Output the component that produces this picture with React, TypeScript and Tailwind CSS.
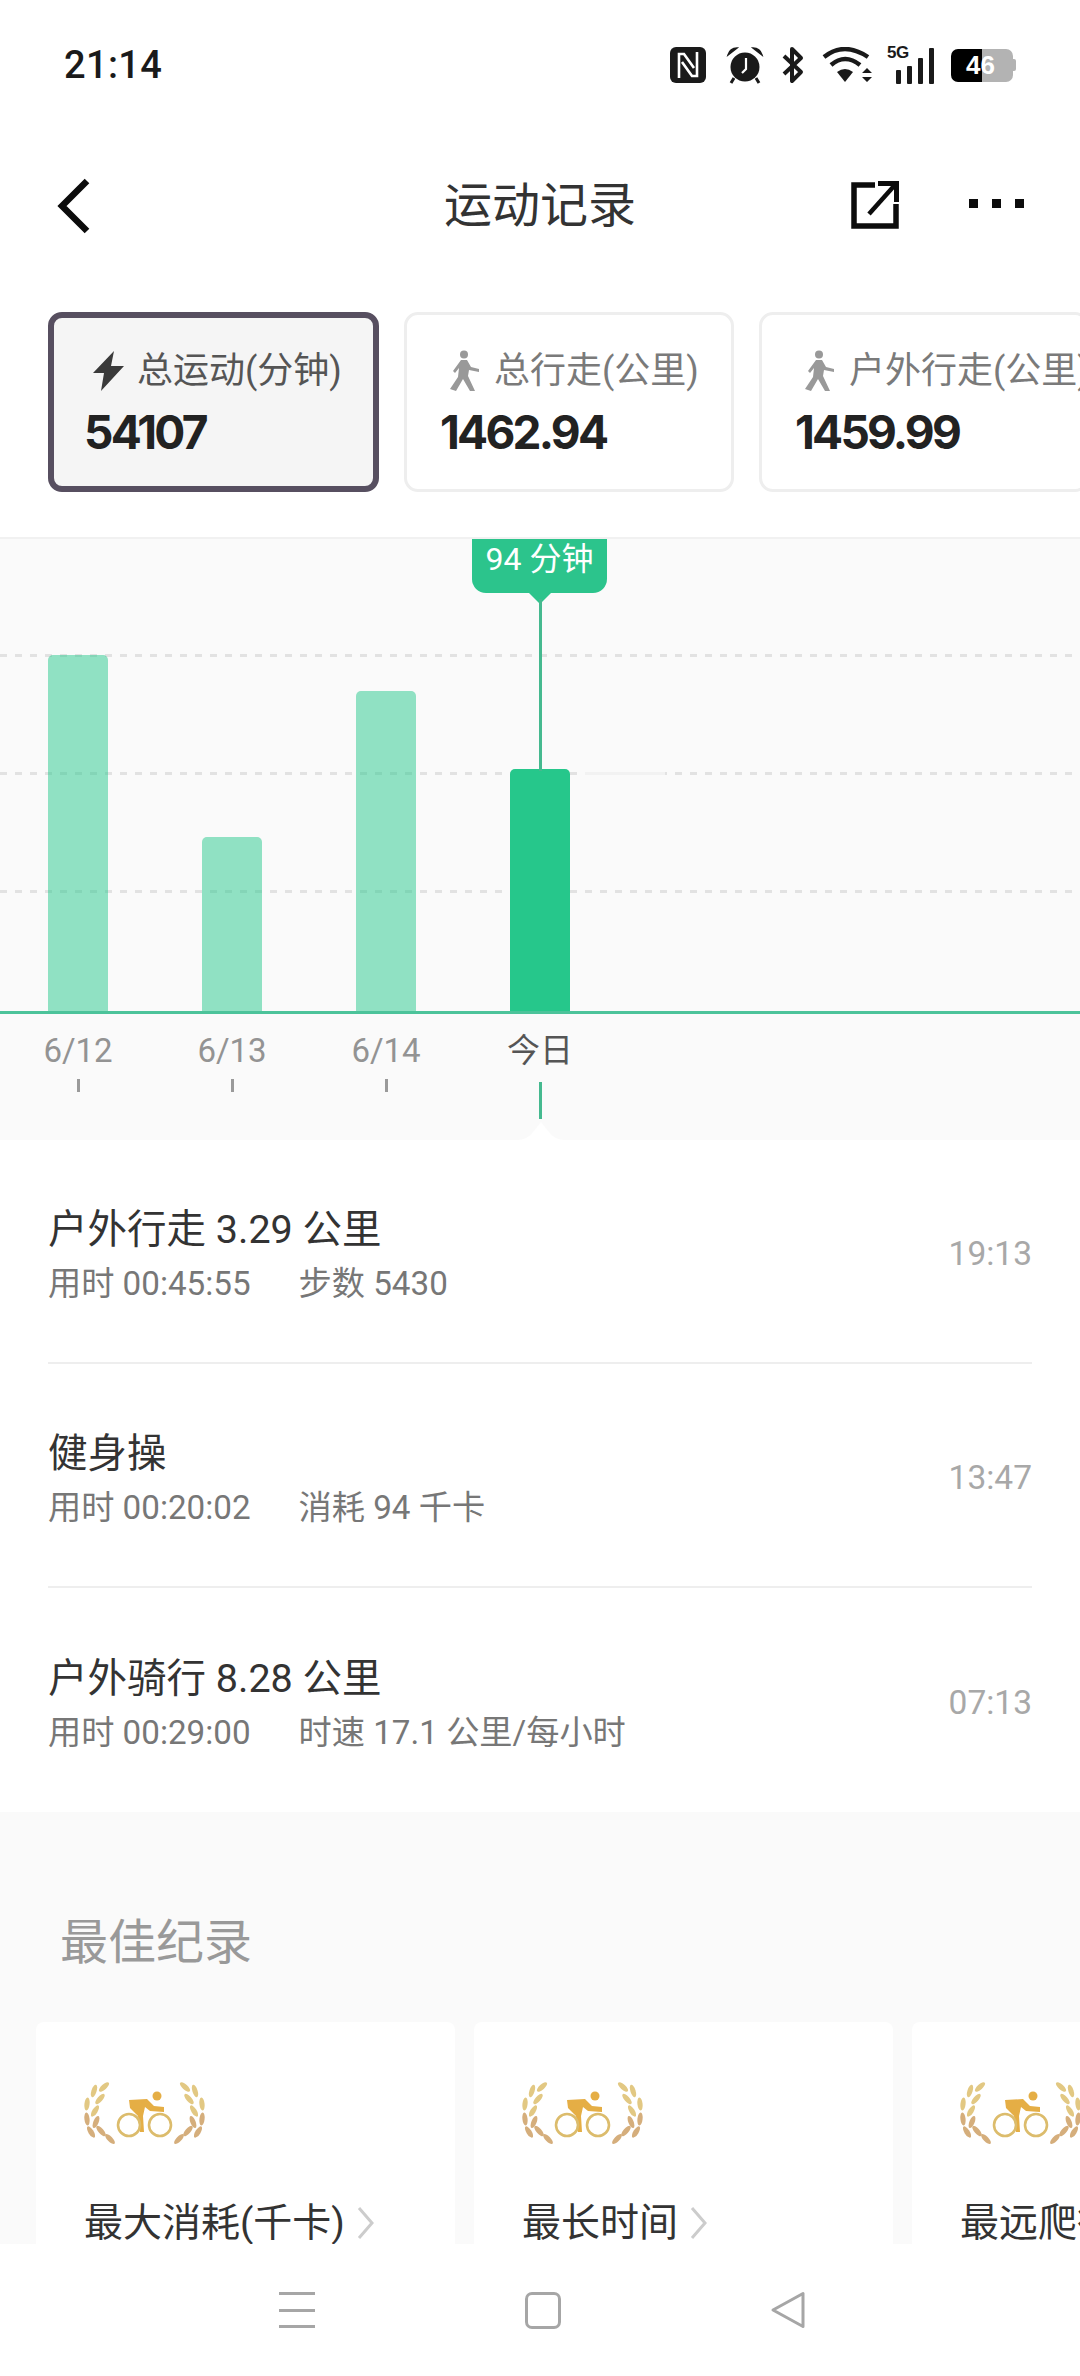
import React from "react";

const Bolt = () => (
  <svg width="34" height="40" viewBox="0 0 34 40" className="shrink-0 ml-[8px]">
    <path d="M22 0 L1 22 L12 22 L9 40 L32 15 L19 15 Z" fill="#3a3a3a" />
  </svg>
);

const Walker = () => (
  <svg width="32" height="42" viewBox="0 0 32 42" className="shrink-0 ml-[9px]">
    <circle cx="15" cy="4.5" r="4" fill="#999" />
    <path d="M12 10 L18 10 L22 17 L30 19 L30 22 L20 20 L19 26 L26 41 L21 41 L14 29 L7 41 L1 39 L9 27 L10 18 L6 23 L4 21 Z" fill="#999" />
  </svg>
);

const StatCard = ({ active, icon, label, value }: { active?: boolean; icon: React.ReactNode; label: string; value: string }) => (
  <div
    className={
      active
        ? "w-[331px] h-[180px] shrink-0 rounded-[14px] border-[6px] border-[#574f60] bg-[#f5f5f5] pt-[31px] pl-[30px]"
        : "w-[330px] h-[180px] shrink-0 rounded-[14px] border-[3px] border-[#eeeeee] bg-white pt-[34px] pl-[33px]"
    }
  >
    <div className={active ? "flex items-center gap-[11px] h-[44px] whitespace-nowrap" : "flex items-center gap-[13px] h-[44px] whitespace-nowrap"}>
      {icon}
      <span className={active ? "text-[36px] leading-[44px] text-[#555]" : "text-[36px] leading-[44px] text-[#7a7a7a]"}>{label}</span>
    </div>
    <div className="mt-[15px] text-[46px] leading-[48px] font-bold tracking-[-0.06em] text-[#222] font-['Inter',sans-serif]">{value}</div>
  </div>
);

const Row = ({ title, sub1, sub2, time, last }: { title: string; sub1: string; sub2: string; time: string; last?: boolean }) => (
  <div className={last ? "h-[224px] pt-[10px] flex items-center justify-between" : "h-[224px] pt-[10px] flex items-center justify-between border-b-2 border-[#eeeeee]"}>
    <div className="flex flex-col gap-[6px]">
      <div className="text-[39.5px] leading-[50px] text-[#333]">{title}</div>
      <div className="flex text-[33.2px] leading-[46px] text-[#777] gap-[48px]">
        <span>{sub1}</span>
        <span>{sub2}</span>
      </div>
    </div>
    <div className="text-[33.5px] text-[#a8a8a8] pb-[4px]">{time}</div>
  </div>
);

const leaves: [number, number, number][] = [
  [44, 27, 48], [34, 31, 18], [40, 39, 42], [27, 44, 6], [35, 51, 32],
  [27, 59, -6], [36, 62, 22], [31, 72, -32], [41, 71, -42], [50, 79, -44],
];

const Laurel = () => (
  <svg width="170" height="90" viewBox="0 0 170 90" className="shrink-0">
    {leaves.map(([x, y, r], i) => (
      <g key={i}>
        <ellipse cx={x} cy={y} rx="2.6" ry="6.5" fill={i < 5 ? "#e2c883" : "#d5ae7c"} transform={`rotate(${r} ${x} ${y})`} />
        <ellipse cx={x} cy={y} rx="2.6" ry="6.5" fill={i < 5 ? "#e2c883" : "#d5ae7c"} transform={`translate(169 0) scale(-1 1) rotate(${r} ${x} ${y})`} />
      </g>
    ))}
    <circle cx="97" cy="36" r="4.5" fill="#e5ae45" />
    <path d="M69 40 L87 39 L94 46 L104 47 L104 52 L90 51 L85 47 L83 56 L84 72 L80 72 L78 56 L70 48 Z" fill="#e5ae45" />
    <circle cx="69" cy="65" r="11" fill="none" stroke="#dcbc6c" strokeWidth="2.6" />
    <circle cx="100" cy="65" r="11" fill="none" stroke="#dcbc6c" strokeWidth="2.6" />
  </svg>
);

const BestCard = ({ title }: { title: string }) => (
  <div className="w-[419px] shrink-0 h-[260px] bg-white rounded-t-[8px] pt-[38px] pl-[24px]">
    <Laurel />
    <div className="mt-[48px] pl-[24px] flex items-center gap-[12px] whitespace-nowrap">
      <span className="text-[39px] leading-[50px] text-[#333]">{title}</span>
      <svg width="18" height="34" viewBox="0 0 18 34">
        <path d="M2 2 L15 17 L2 32" fill="none" stroke="#cccccc" strokeWidth="3" />
      </svg>
    </div>
  </div>
);

const StatusIcons = () => (
  <div className="flex items-center pt-[2px]">
    <svg width="36" height="36" viewBox="0 0 36 36" className="mr-[20px]">
      <rect width="36" height="36" rx="6" fill="#1a1a1a" />
      <path d="M9 31 V7 H14 L24 21 M27 5 V29 H22 L12 15" fill="none" stroke="#fff" strokeWidth="2.6" />
    </svg>
    <svg width="38" height="38" viewBox="0 0 38 38" className="mr-[18px]">
      <circle cx="19" cy="21" r="14.5" fill="#1a1a1a" />
      <path d="M2 9 Q4 2 11 2 Z M36 9 Q34 2 27 2 Z" fill="#1a1a1a" stroke="#1a1a1a" strokeWidth="1.5" />
      <path d="M8 32 L5 37 M30 32 L33 37" stroke="#1a1a1a" strokeWidth="3" />
      <path d="M20 12 V23 L16 27" fill="none" stroke="#fff" strokeWidth="2.2" />
    </svg>
    <svg width="22" height="38" viewBox="0 0 22 38" className="mr-[18px]">
      <path d="M2 10 L19 26 L10 35 V3 L19 12 L2 28" fill="none" stroke="#1a1a1a" strokeWidth="4" strokeLinejoin="round" />
    </svg>
    <svg width="50" height="36" viewBox="0 0 50 36" className="mr-[15px]">
      <path d="M2 10 Q22 -6 46 10" fill="none" stroke="#1a1a1a" strokeWidth="4.4" />
      <path d="M9 18 Q23 6 38 18" fill="none" stroke="#1a1a1a" strokeWidth="4.4" />
      <path d="M15 25 L23 35 L31 25 Q23 19 15 25 Z" fill="#1a1a1a" />
      <path d="M40 26 L45 21 L50 26 Z M40 30 L50 30 L45 35 Z" fill="#1a1a1a" />
    </svg>
    <div className="relative w-[47px] h-[37px] mr-[17px]">
      <span className="absolute left-0 top-[-3px] text-[17px] leading-[18px] font-bold tracking-[-0.03em] text-[#1a1a1a] font-['Liberation_Sans',sans-serif]">5G</span>
      <div className="absolute inset-0 flex items-end justify-end gap-[6px]">
        <div className="w-[5px] h-[14px] bg-[#1a1a1a] rounded-[1px]" />
        <div className="w-[5px] h-[18px] bg-[#1a1a1a] rounded-[1px]" />
        <div className="w-[5px] h-[26px] bg-[#1a1a1a] rounded-[1px]" />
        <div className="w-[5px] h-[36px] bg-[#1a1a1a] rounded-[1px]" />
      </div>
    </div>
    <div className="relative flex items-center">
      <div className="w-[62px] h-[33px] rounded-[7px] overflow-hidden flex">
        <div className="w-[31px] bg-black" />
        <div className="w-[31px] bg-[#b3b3b3]" />
      </div>
      <div className="w-[3px] h-[12px] bg-[#b3b3b3] rounded-r-[2px]" />
      <span className="absolute left-[15px] top-0 h-[33px] leading-[33px] text-[26px] font-bold text-white font-['Liberation_Sans',sans-serif]">46</span>
    </div>
  </div>
);

const labels = [
  { t: "6/12", bar: 356, active: false },
  { t: "6/13", bar: 174, active: false },
  { t: "6/14", bar: 320, active: false },
  { t: "今日", bar: 242, active: true },
];

const Grid = "h-[3px] w-full bg-[repeating-linear-gradient(90deg,#e2e2e2_0_7px,transparent_7px_15px)]";

export default function App() {
  return (
    <div className="w-[1080px] h-[2376px] overflow-hidden bg-white flex flex-col font-['Roboto','Noto_Sans_CJK_SC',sans-serif]">
      {/* status bar */}
      <div className="h-[128px] shrink-0 flex items-center justify-between pl-[64px] pr-[64px]">
        <span className="text-[38px] font-medium text-[#1a1a1a] tracking-[0.01em] pt-[2px]">21:14</span>
        <StatusIcons />
      </div>

      {/* header */}
      <div className="relative h-[156px] shrink-0 flex items-center justify-between pl-[56px] pr-[56px]">
        <svg width="36" height="56" viewBox="0 0 36 56">
          <path d="M31 3 L6 28 L31 53" fill="none" stroke="#0c0c0c" strokeWidth="6.5" />
        </svg>
        <div className="absolute left-0 right-0 text-center text-[48px] leading-[60px] text-[#333]">运动记录</div>
        <div className="flex items-center gap-[69px]">
          <svg width="50" height="50" viewBox="0 0 50 50" className="mb-[3px]">
            <path d="M25 5 H4 V46 H46 V24" fill="none" stroke="#0c0c0c" strokeWidth="5.5" />
            <path d="M19 34 L44 6" fill="none" stroke="#0c0c0c" strokeWidth="4.5" />
            <path d="M28 1 H49 V22 H44 V6 H28 Z" fill="#0c0c0c" />
          </svg>
          <div className="flex gap-[14px] mb-[6px]">
            <div className="w-[9px] h-[9px] bg-[#0c0c0c]" />
            <div className="w-[9px] h-[9px] bg-[#0c0c0c]" />
            <div className="w-[9px] h-[9px] bg-[#0c0c0c]" />
          </div>
        </div>
      </div>

      {/* stat cards */}
      <div className="mt-[28px] shrink-0 flex gap-[25px] pl-[48px] overflow-hidden">
        <StatCard active icon={<Bolt />} label="总运动(分钟)" value="54107" />
        <StatCard icon={<Walker />} label="总行走(公里)" value="1462.94" />
        <StatCard icon={<Walker />} label="户外行走(公里)" value="1459.99" />
      </div>

      {/* chart */}
      <div className="mt-[45px] relative h-[603px] shrink-0 bg-[#fafafa] border-t-2 border-[#f1f1f1] overflow-hidden">
        <div className="relative h-[472px] border-b-[3px] border-[#4cc39a] box-content">
          <div className="absolute inset-0 flex flex-col pt-[115px] gap-[115px]">
            <div className={Grid} />
            <div className={Grid} />
            <div className={Grid} />
          </div>
          <div className="absolute left-[585px] top-[233px] w-[80px] h-[3px] bg-[#f2f2f2]" />
          <div className="absolute inset-0 flex items-end pl-[48px] gap-[94px]">
            {labels.map((l) => (
              <div
                key={l.t}
                style={{ height: l.bar }}
                className={l.active ? "w-[60px] rounded-t-[5px] bg-[#26c78b]" : "w-[60px] rounded-t-[5px] bg-[#26c78b]/50"}
              />
            ))}
          </div>
          {/* tooltip */}
          <div className="absolute left-[472px] top-0 w-[135px] h-[54px] rounded-b-[14px] bg-[#2cc48c] text-white text-[32px] leading-[40px] text-center whitespace-nowrap">
            94 分钟
          </div>
          <svg width="24" height="12" viewBox="0 0 24 12" className="absolute left-[528px] top-[53px]">
            <path d="M0 0 H24 L12 12 Z" fill="#2cc48c" />
          </svg>
          <div className="absolute left-[539px] top-[60px] w-[3px] h-[172px] bg-[#45b98f]" />
        </div>
        <div className="flex pl-[48px] gap-[94px] pt-[15px]">
          {labels.map((l) => (
            <div key={l.t} className="w-[60px] flex flex-col items-center">
              <span className={l.active ? "text-[33px] leading-[44px] whitespace-nowrap text-[#555]" : "text-[33px] leading-[44px] whitespace-nowrap text-[#939393]"}>{l.t}</span>
              {l.active ? (
                <div className="mt-[9px] w-[3px] h-[37px] bg-[#45b98f]" />
              ) : (
                <div className="mt-[6px] w-[3px] h-[13px] bg-[#9a9a9a]" />
              )}
            </div>
          ))}
        </div>
        <svg width="48" height="22" viewBox="0 0 48 22" className="absolute left-[517px] bottom-0">
          <path d="M0 22 Q10 22 16 14 L24 4 L32 14 Q38 22 48 22 Z" fill="#ffffff" />
        </svg>
      </div>

      {/* list */}
      <div className="shrink-0 pl-[48px] pr-[48px]">
        <Row title="户外行走 3.29 公里" sub1="用时 00:45:55" sub2="步数 5430" time="19:13" />
        <Row title="健身操" sub1="用时 00:20:02" sub2="消耗 94 千卡" time="13:47" />
        <Row title="户外骑行 8.28 公里" sub1="用时 00:29:00" sub2="时速 17.1 公里/每小时" time="07:13" last />
      </div>

      {/* best records */}
      <div className="h-[432px] shrink-0 bg-[#fafafa] overflow-hidden">
        <div className="pl-[60px] pt-[99px] text-[48px] leading-[64px] text-[#999]">最佳纪录</div>
        <div className="mt-[47px] flex gap-[19px] pl-[36px]">
          <BestCard title="最大消耗(千卡)" />
          <BestCard title="最长时间" />
          <BestCard title="最远爬行" />
        </div>
      </div>

      {/* nav */}
      <div className="h-[132px] shrink-0 bg-white flex items-center pl-[279px]">
        <div className="w-[36px] h-[36px] flex flex-col justify-between">
          <div className="h-[3px] bg-[#a6a6a6]" />
          <div className="h-[3px] bg-[#a6a6a6]" />
          <div className="h-[3px] bg-[#a6a6a6]" />
        </div>
        <div className="ml-[210px] w-[36px] h-[37px] rounded-[7px] border-[3px] border-[#a6a6a6]" />
        <svg width="36" height="38" viewBox="0 0 36 38" className="ml-[209px]">
          <path d="M33 2.5 V35.5 L3 19 Z" fill="none" stroke="#a6a6a6" strokeWidth="3" strokeLinejoin="round" />
        </svg>
      </div>
    </div>
  );
}
